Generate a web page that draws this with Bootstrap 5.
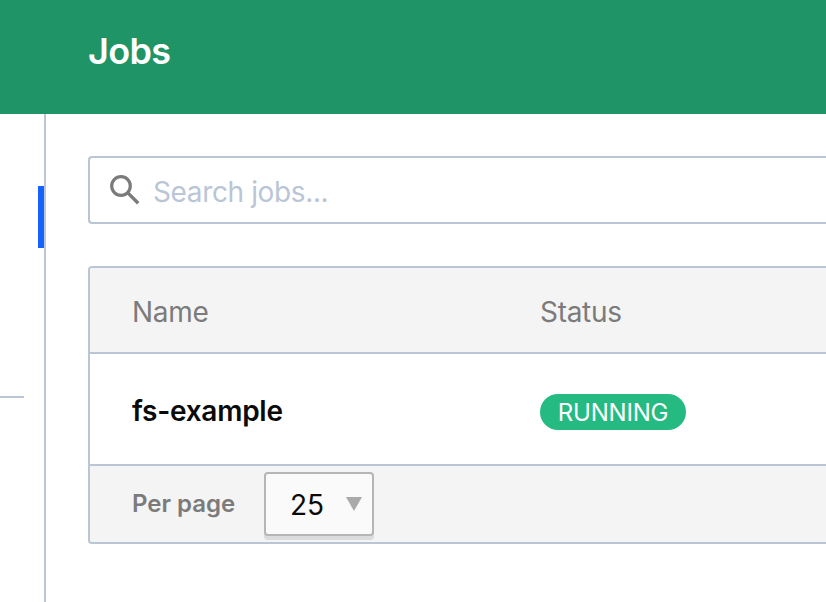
<!DOCTYPE html>
<html lang="en">
<head>
<meta charset="utf-8">
<meta name="viewport" content="width=device-width, initial-scale=1">
<title>Jobs</title>
<link href="https://cdn.jsdelivr.net/npm/bootstrap@5.3.0/dist/css/bootstrap.min.css" rel="stylesheet">
<style>
body { font-family: Inter, "Liberation Sans", sans-serif; font-size: 28px; line-height: 34px; color: #0a0a0a; background: #fff; height: 602px; }
.topbar { height: 114px; background: #1e9467; padding: 0 88px 12px; }
.topbar h1 { font-size: 36px; line-height: 44px; font-weight: 600; letter-spacing: -.7px; }
.gutter { width: 46px; border-right: 2px solid #bac5d5; padding-top: 72px; }
.active-mark { width: 6px; height: 62px; background: #1563ff; }
.divider { width: 24px; height: 2px; background: #bac5d5; margin-top: 148px; }
.main { padding: 42px 0 0 42px; }
.search-box { height: 68px; border: 2px solid #bac5d5; border-right: 0; border-radius: 4px 0 0 4px; padding-left: 20px; }
.search-box input { color: #0a0a0a; padding: 4px 0 0; margin-left: 13px; line-height: 34px; letter-spacing: -.37px; }
.search-box input::placeholder { color: #bac5d5; opacity: 1; }
.jobs-panel { margin-top: 42px; height: 278px; border: 2px solid #bac5d5; border-right: 0; border-radius: 4px 0 0 4px; }
.line { padding-left: 42px; }
.line-head { height: 86px; background: #f4f4f4; color: #7b7b7b; border-bottom: 2px solid #bac5d5; padding-top: 4px; letter-spacing: -.3px; }
.line-job { height: 112px; border-bottom: 2px solid #bac5d5; padding-top: 3px; }
.line-foot { height: 76px; background: #f4f4f4; }
.col-name { width: 408px; }
.job-name { font-weight: 600; letter-spacing: -.25px; }
.status { width: 146px; height: 36px; background: #26ba83; font-size: 24px; line-height: 37px; letter-spacing: -.2px; color: #fff; margin-top: 2px; }
.per-page { color: #7b7b7b; font-size: 24px; font-weight: 600; width: 132px; }
.picker { width: 110px; height: 64px; background: #fafafa; border: 2px solid #b5b5b5; border-radius: 4px; box-shadow: 0 4px 0 #dcdcdc; padding: 0 10px 0 24px; }
.picker-value { padding-top: 2px; }
</style>
</head>
<body class="d-flex flex-column overflow-hidden">
<header class="topbar d-flex align-items-center text-white">
  <h1 class="m-0">Jobs</h1>
</header>
<div class="d-flex flex-grow-1">
  <aside class="gutter flex-shrink-0">
    <div class="active-mark ms-auto"></div>
    <div class="divider"></div>
  </aside>
  <main class="main flex-grow-1">
    <div class="search-box d-flex align-items-center">
      <svg width="30" height="30" viewBox="0 0 30 30" fill="none" stroke="#7b7b7b" class="flex-shrink-0">
        <circle cx="11" cy="11" r="9.3" stroke-width="3.2"/>
        <path d="M17.6 17.6 28.2 28.2" stroke-width="3.4"/>
      </svg>
      <input type="text" class="border-0 bg-transparent flex-grow-1" placeholder="Search jobs..." aria-label="Search jobs">
    </div>
    <section class="jobs-panel overflow-hidden">
      <div class="line line-head d-flex align-items-center">
        <div class="col-name">Name</div>
        <div>Status</div>
      </div>
      <div class="line line-job d-flex align-items-center">
        <div class="col-name job-name">fs-example</div>
        <span class="status rounded-pill text-center">RUNNING</span>
      </div>
      <div class="line line-foot d-flex align-items-center">
        <span class="per-page">Per page</span>
        <div class="picker d-flex align-items-center justify-content-between" role="button">
          <span class="picker-value">25</span>
          <svg width="16" height="14" viewBox="0 0 16 14"><path d="M0 0H16L8 14Z" fill="#aaa"/></svg>
        </div>
      </div>
    </section>
  </main>
</div>
<script src="https://cdn.jsdelivr.net/npm/bootstrap@5.3.0/dist/js/bootstrap.bundle.min.js"></script>
</body>
</html>
